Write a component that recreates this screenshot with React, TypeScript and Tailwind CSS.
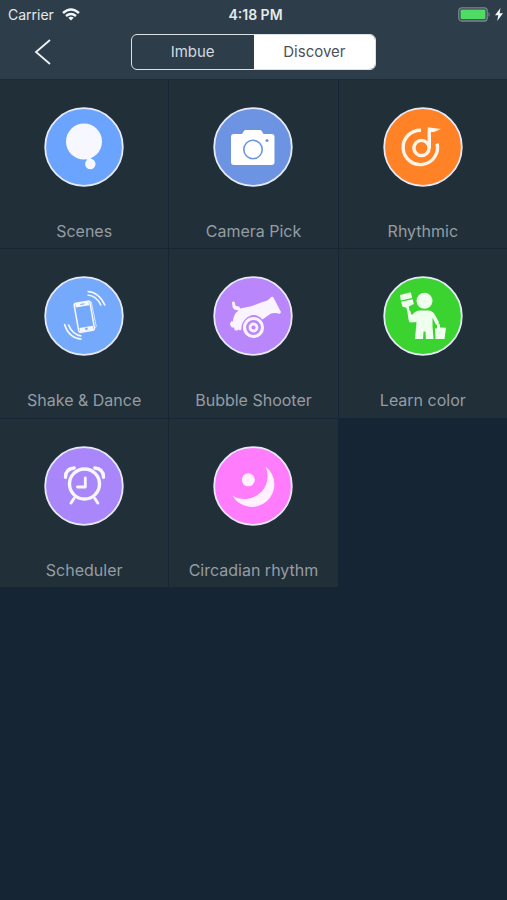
import { useState, type ReactNode } from "react";

type Feature = { label: string; color: string; icon: ReactNode };

const INK = "#f7f7ff";

const features: Feature[] = [
  {
    label: "Scenes",
    color: "#6ba4ff",
    icon: (
      <g fill={INK}>
        <circle cx="50.5" cy="45.5" r="18" />
        <circle cx="56.8" cy="68" r="5.2" />
        <path d="M52.5 62h5l1 3h-4z" />
      </g>
    ),
  },
  {
    label: "Camera Pick",
    color: "#6c94e3",
    icon: (
      <g>
        <path
          fill="#fff"
          d="M31.5 38h7q1.5 0 2-1.5l.6-1.2q.7-1.3 2.4-1.3h13.500q1.700 0 2.400 1.300l.6 1.200q.5 1.500 2 1.500h7q3 0 3 3v25q0 3-3 3h-37.500q-3 0-3-3v-25q0-3 3-3z"
        />
        <circle cx="50.5" cy="53.5" r="9.2" fill="none" stroke="#6c94e3" strokeWidth="1.6" />
        <circle cx="64.5" cy="44.5" r="1.5" fill="#6c94e3" />
      </g>
    ),
  },
  {
    label: "Rhythmic",
    color: "#ff8227",
    icon: (
      <g fill="none" stroke="#fff4e8" strokeWidth="3.4">
        <path d="M48.5 34.2A17.200 17.200 0 1 0 64.600 47.500" />
        <circle cx="49" cy="52" r="7.6" />
        <path d="M56.8 52V32.5" />
        <path d="M55.1 31.2L68.500 33l-7 3h-5z" fill="#fff4e8" stroke="none" />
      </g>
    ),
  },
  {
    label: "Shake & Dance",
    color: "#75a9fb",
    icon: (
      <g fill="none" stroke={INK}>
        <path d="M56 36.2l1.8.8 5 24.5-2 1.500" strokeWidth="1" opacity=".8" />
        <rect x="42.8" y="37" width="16" height="29.5" rx="2" transform="rotate(-10 50.8 51.7)" strokeWidth="1.5" />
        <g transform="rotate(-10 50.8 51.7)">
          <path d="M44 39.2h13.600M44 64h13.600" strokeWidth="4" />
          <circle cx="50.8" cy="64" r="1.3" fill="#75a9fb" stroke="none" />
          <path d="M49 39h4" stroke="#75a9fb" strokeWidth="1" />
        </g>
        <path d="M54 26.5Q65.500 27 71.500 40.500M54 30Q63 30.500 67.500 40.500" strokeWidth="1.7" />
        <path d="M31 59Q35 73 48 74.200M34.800 59.500Q39 69.800 48 71" strokeWidth="1.7" />
      </g>
    ),
  },
  {
    label: "Bubble Shooter",
    color: "#b986fc",
    icon: (
      <g>
        <path
          fill="#f9f4ff"
          d="M29.5 37q2.500-1.500 3 1 .2 3.200 2 3.200 3.200-.2 3 2.300Q46 42 50 40.700L60 37q6-1 8.500-5l2-.3L78.500 47l-1 1.800q-6-1.500-9.500 0l-8 5.700q-9-9-17.500 0Q38.500 59 39 64l-1.200 1.500-2.200-1-1 1.200-2.600-.7-.3-2.200-2.700-.6-1.700-3 1.500-3.200 1.500.5Q31 49 36 45.500q-5-.5-6-3.500z"
        />
        <circle cx="51" cy="62.5" r="9" fill="none" stroke="#f9f4ff" strokeWidth="3.2" />
        <circle cx="51" cy="62.5" r="3.5" fill="none" stroke="#f9f4ff" strokeWidth="2.8" />
      </g>
    ),
  },
  {
    label: "Learn color",
    color: "#3bd330",
    icon: (
      <g fill="#efffed">
        <circle cx="52" cy="35.8" r="8" />
        <path d="M27.500 30l10.800-2.700 1.300 5.600-11.300 2.500z" />
        <path d="M28.700 36.700l11.400-2.500 1.200 4.800-5 2.600.5 3.400q2 1.500 1.500 3.500l1.200 1.600q3.500-4.600 8-4.600h8q4.800 0 7 4.500l4 7.200-.8 2.500h-2.200L60 52.500v9l1 12.500h-7.600L53 66.500h-2L50.500 74h-8l1.500-17-5.500.5q-2.500-.5-2.500-3L34.800 46l-1-3.200-4-1.300z" />
        <path d="M62.500 63.500h2v-4.200h3v3.200l6 .3L72 74h-9z" />
      </g>
    ),
  },
  {
    label: "Scheduler",
    color: "#a986fa",
    icon: (
      <g fill="none" stroke={INK} strokeWidth="3.4" strokeLinecap="round" strokeLinejoin="round">
        <circle cx="51" cy="49" r="15" />
        <path d="M51.8 43v9H44" strokeWidth="2.8" />
        <path d="M40.5 63.500l-3 4.500M61.300 63.500l3 4.500" strokeWidth="3" />
        <path d="M32 42.200q0-8.500 8.700-9.200M70 42.200q0-8.500-8.700-9.200" />
      </g>
    ),
  },
  {
    label: "Circadian rhythm",
    color: "#ff7cfd",
    icon: (
      <g fill="#fff1ff">
        <circle cx="45.8" cy="44.8" r="6.5" />
        <path d="M63 31.500A22.500 22.500 0 1 1 29.800 60.500 23 23 0 0 0 63 31.500z" />
      </g>
    ),
  },
];

function StatusBar() {
  return (
    <div className="grid h-7 grid-cols-3 items-center pr-1 pl-2 text-[14px] text-[#e4e9ec]">
      <div className="flex items-center gap-2">
        <span>Carrier</span>
        <svg width="18" height="13" viewBox="0 0 18 13" aria-hidden="true" fill="none" stroke="#f2f6f8" strokeWidth="2.4">
          <path d="M1 5q8-7 16 0M4 8q5-4.200 10 0" />
          <path d="M6.300 9.800q2.700-2 5.400 0L9 12.600z" fill="#f2f6f8" stroke="none" />
        </svg>
      </div>
      <span className="text-center font-semibold">4:18 PM</span>
      <div className="flex items-center justify-end gap-1">
        <svg width="33" height="15" viewBox="0 0 33 15" aria-hidden="true">
          <rect x=".8" y=".8" width="28.4" height="13.2" rx="3" fill="none" stroke="#7b8891" strokeWidth="1.3" />
          <rect x="2.5" y="2.5" width="25" height="9.8" rx="1" fill="#4fdb64" />
          <path d="M30.500 5q2.500 2.500 0 5z" fill="#7b8891" />
        </svg>
        <svg width="8" height="13" viewBox="0 0 8 13" aria-hidden="true">
          <path d="M5.500 0L0 7.200h3.300L2.200 13 8 5.300H4.600z" fill="#f2f6f8" />
        </svg>
      </div>
    </div>
  );
}

function FeatureTile({ label, color, icon }: Feature) {
  return (
    <button
      type="button"
      className="flex aspect-square flex-col items-center gap-[34px] bg-[#212f39] pt-[27px] text-[16px] leading-5 text-[#959da3]"
    >
      <svg viewBox="10.5 11 80 80" className="size-20 shrink-0" aria-hidden="true">
        <circle cx="50.5" cy="51" r="38.8" fill={color} stroke="#e6eaf8" strokeWidth="1.8" />
        {icon}
      </svg>
      <span className="whitespace-nowrap">{label}</span>
    </button>
  );
}

export default function App() {
  const [tab, setTab] = useState("Discover");
  return (
    <div className="min-h-screen bg-[#152533] font-['Inter','Liberation_Sans',sans-serif]">
      <header className="h-20 border-b border-[#1b2a35] bg-[#2d3d49]">
        <StatusBar />
        <nav className="grid grid-cols-4 items-center pt-[6px]">
          <button type="button" aria-label="Back" className="w-14 pl-[34px]">
            <svg width="18" height="26" viewBox="0 0 18 26" fill="none" stroke="#edf3f6" strokeWidth="1.8" aria-hidden="true">
              <path d="M16 1L2 13l14 12" />
            </svg>
          </button>
          <div className="col-span-2 mx-1 flex h-9 overflow-hidden rounded-md border border-[#d9e1e7] text-[15px]">
            {["Imbue", "Discover"].map((name) => (
              <button
                key={name}
                type="button"
                aria-pressed={tab === name}
                onClick={() => setTab(name)}
                className={tab === name ? "flex-1 bg-white pt-px text-[#4b5259]" : "flex-1 pt-px text-[#d3dae0]"}
              >
                {name}
              </button>
            ))}
          </div>
        </nav>
      </header>
      <main className="grid grid-cols-3 gap-px">
        {features.map((feature) => (
          <FeatureTile key={feature.label} {...feature} />
        ))}
      </main>
    </div>
  );
}
